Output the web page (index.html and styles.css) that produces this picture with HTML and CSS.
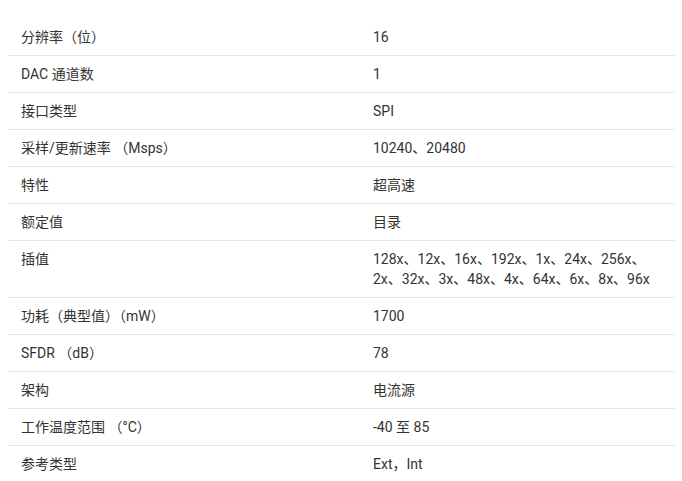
FILE: index.html
```html
<!DOCTYPE html>
<html lang="zh">
<head>
<meta charset="utf-8">
<link rel="stylesheet" href="styles.css">
</head>
<body>
<table class="spec">
<tbody>
<tr><td class="k">分辨率（位）</td><td class="v">16</td></tr>
<tr><td class="k">DAC 通道数</td><td class="v">1</td></tr>
<tr><td class="k">接口类型</td><td class="v">SPI</td></tr>
<tr><td class="k">采样/更新速率 （Msps）</td><td class="v">10240、20480</td></tr>
<tr><td class="k">特性</td><td class="v">超高速</td></tr>
<tr><td class="k">额定值</td><td class="v">目录</td></tr>
<tr><td class="k">插值</td><td class="v">128x、12x、16x、192x、1x、24x、256x、<br>2x、32x、3x、48x、4x、64x、6x、8x、96x</td></tr>
<tr><td class="k">功耗（典型值）（mW）</td><td class="v">1700</td></tr>
<tr><td class="k">SFDR （dB）</td><td class="v">78</td></tr>
<tr><td class="k">架构</td><td class="v">电流源</td></tr>
<tr><td class="k">工作温度范围 （°C）</td><td class="v">-40 至 85</td></tr>
<tr><td class="k">参考类型</td><td class="v">Ext，Int</td></tr>
</tbody>
</table>
</body>
</html>
```
FILE: styles.css
```css
body {
  margin: 19px 7px 0 8px;
  background: #fff;
  font-family: Roboto, "Noto Sans CJK SC", sans-serif;
  font-size: 14px;
  color: #333;
}
.spec {
  width: 667px;
  border-collapse: collapse;
}
.spec td {
  padding: 8px 13px;
  line-height: 20px;
  vertical-align: top;
  border-bottom: 1px solid #e5e5e5;
}
.spec td.k {
  width: 326px;
}
```
